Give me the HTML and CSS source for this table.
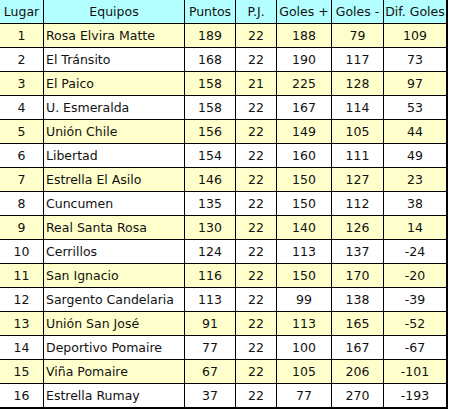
FILE: index.html
```html
<!DOCTYPE html>
<html lang="es">
<head>
<meta charset="utf-8">
<title>Tabla de posiciones</title>
<link rel="stylesheet" href="styles.css">
</head>
<body>
<table class="standings">
  <colgroup>
    <col class="c-pos"><col class="c-team"><col class="c-pts"><col class="c-pj"><col class="c-gf"><col class="c-gc"><col class="c-dif">
  </colgroup>
  <thead>
    <tr><th>Lugar</th><th>Equipos</th><th>Puntos</th><th>P.J.</th><th>Goles +</th><th>Goles -</th><th>Dif. Goles</th></tr>
  </thead>
  <tbody>
    <tr class="odd"><td>1</td><td class="team">Rosa Elvira Matte</td><td>189</td><td>22</td><td>188</td><td>79</td><td>109</td></tr>
    <tr><td>2</td><td class="team">El Tránsito</td><td>168</td><td>22</td><td>190</td><td>117</td><td>73</td></tr>
    <tr class="odd"><td>3</td><td class="team">El Paico</td><td>158</td><td>21</td><td>225</td><td>128</td><td>97</td></tr>
    <tr><td>4</td><td class="team">U. Esmeralda</td><td>158</td><td>22</td><td>167</td><td>114</td><td>53</td></tr>
    <tr class="odd"><td>5</td><td class="team">Unión Chile</td><td>156</td><td>22</td><td>149</td><td>105</td><td>44</td></tr>
    <tr><td>6</td><td class="team">Libertad</td><td>154</td><td>22</td><td>160</td><td>111</td><td>49</td></tr>
    <tr class="odd"><td>7</td><td class="team">Estrella El Asilo</td><td>146</td><td>22</td><td>150</td><td>127</td><td>23</td></tr>
    <tr><td>8</td><td class="team">Cuncumen</td><td>135</td><td>22</td><td>150</td><td>112</td><td>38</td></tr>
    <tr class="odd"><td>9</td><td class="team">Real Santa Rosa</td><td>130</td><td>22</td><td>140</td><td>126</td><td>14</td></tr>
    <tr><td>10</td><td class="team">Cerrillos</td><td>124</td><td>22</td><td>113</td><td>137</td><td>-24</td></tr>
    <tr class="odd"><td>11</td><td class="team">San Ignacio</td><td>116</td><td>22</td><td>150</td><td>170</td><td>-20</td></tr>
    <tr><td>12</td><td class="team">Sargento Candelaria</td><td>113</td><td>22</td><td>99</td><td>138</td><td>-39</td></tr>
    <tr class="odd"><td>13</td><td class="team">Unión San José</td><td>91</td><td>22</td><td>113</td><td>165</td><td>-52</td></tr>
    <tr><td>14</td><td class="team">Deportivo Pomaire</td><td>77</td><td>22</td><td>100</td><td>167</td><td>-67</td></tr>
    <tr class="odd"><td>15</td><td class="team">Viña Pomaire</td><td>67</td><td>22</td><td>105</td><td>206</td><td>-101</td></tr>
    <tr><td>16</td><td class="team">Estrella Rumay</td><td>37</td><td>22</td><td>77</td><td>270</td><td>-193</td></tr>
  </tbody>
</table>
</body>
</html>
```
FILE: styles.css
```css
html, body {
  margin: 0;
  padding: 0;
  background: #ffffff;
}

.standings {
  border-collapse: separate;
  border-spacing: 0;
  table-layout: fixed;
  width: 448px;
  font-family: "DejaVu Sans", Verdana, sans-serif;
  font-size: 12.5px;
  color: #111;
}

.c-pos { width: 44px; }
.c-team { width: 141px; }
.c-pts { width: 51px; }
.c-pj { width: 41px; }
.c-gf { width: 55px; }
.c-gc { width: 52px; }
.c-dif { width: 64px; }

.standings th,
.standings td {
  box-sizing: border-box;
  height: 24px;
  padding: 0;
  border-right: 1px solid #000;
  border-bottom: 1px solid #000;
  text-align: center;
  vertical-align: middle;
  font-weight: normal;
  white-space: nowrap;
  overflow: hidden;
}

.standings th {
  background: #b3ffff;
}

.standings th:last-child,
.standings td:last-child {
  border-right-width: 2px;
}

.standings tbody tr:last-child td {
  border-bottom-width: 2px;
  height: 25px;
}

.standings tr.odd td {
  background: #ffffcc;
}

.standings td.team {
  text-align: left;
  padding-left: 2px;
}
```
